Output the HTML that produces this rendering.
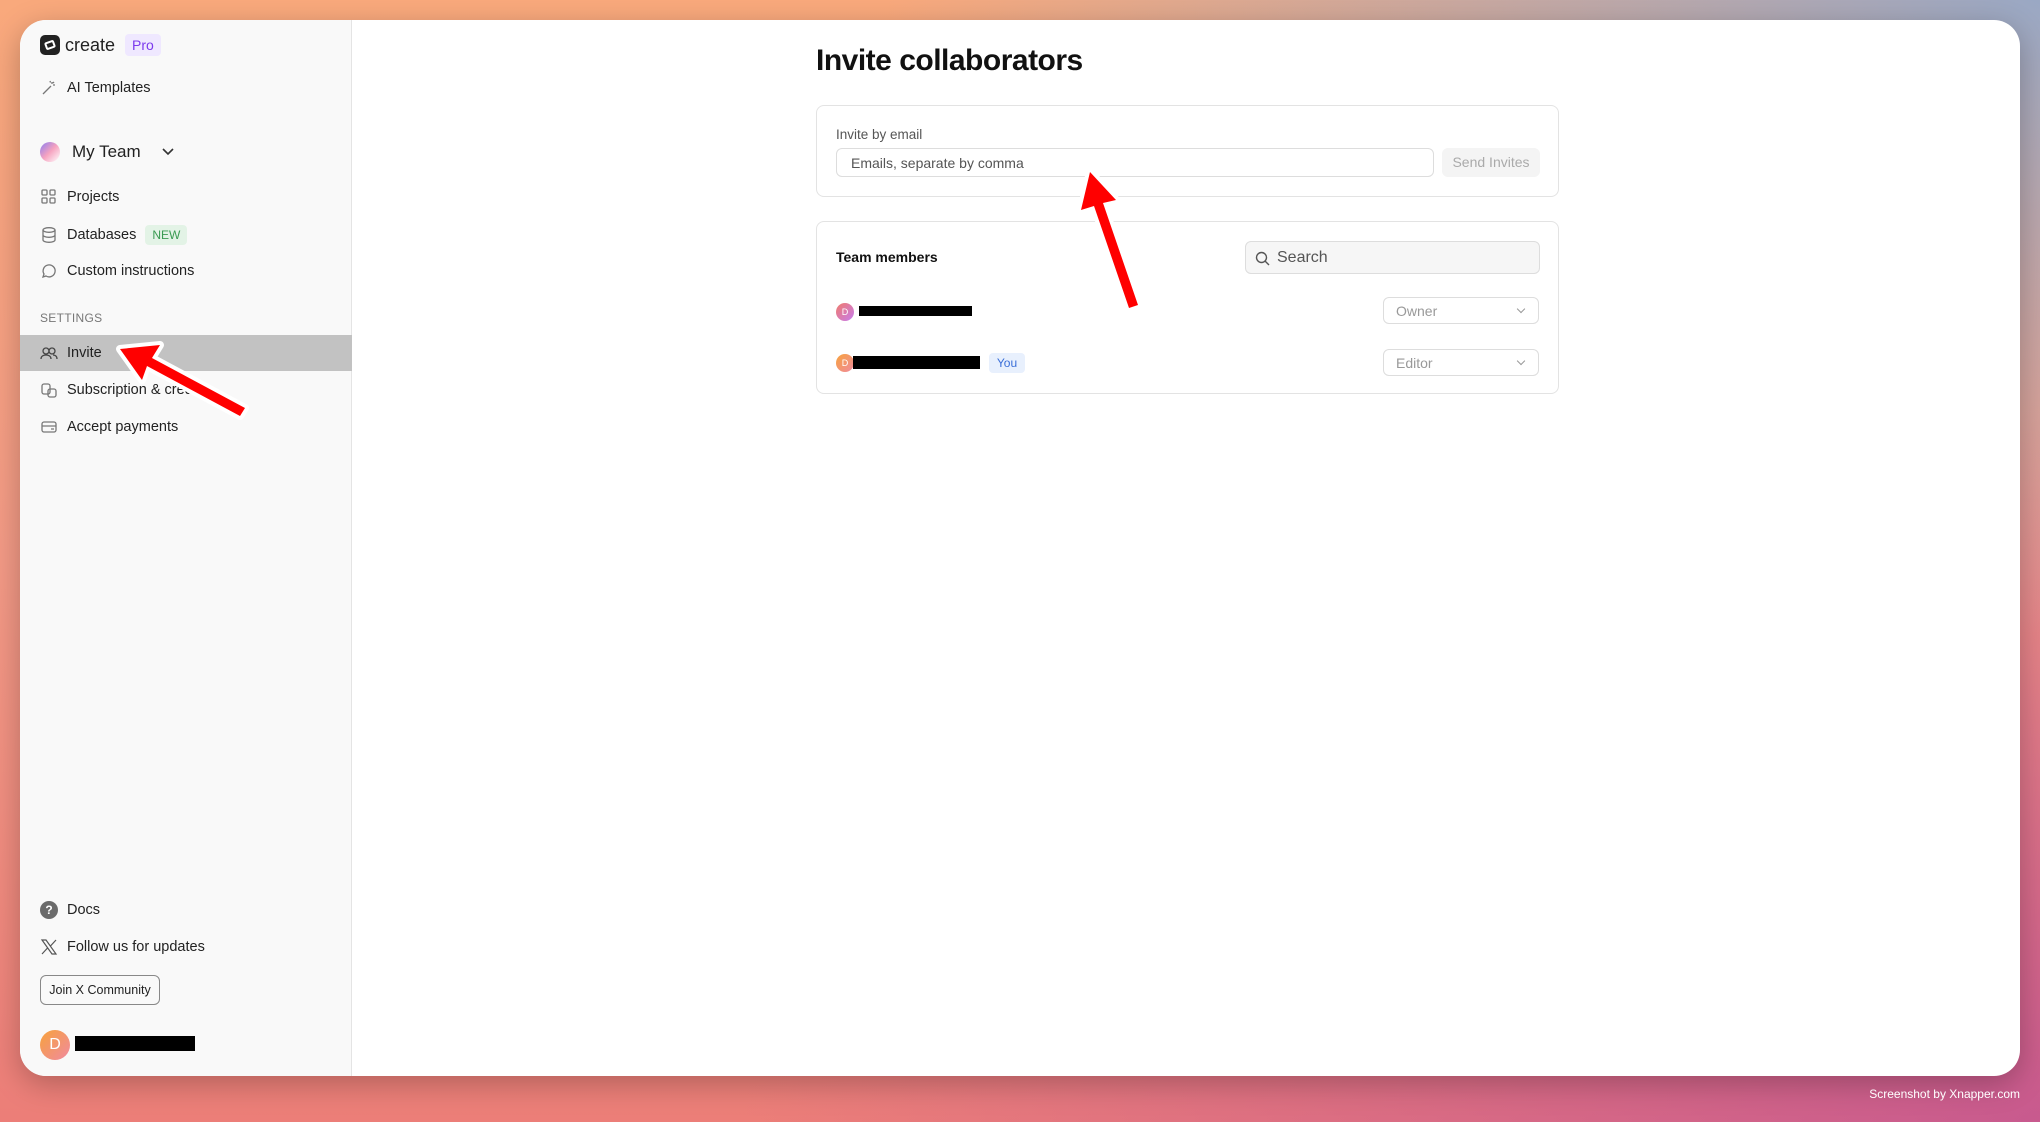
<!DOCTYPE html>
<html><head><meta charset="utf-8"><style>
*{box-sizing:border-box;margin:0;padding:0}
body{width:2040px;height:1122px;overflow:hidden;font-family:"Liberation Sans",sans-serif;position:relative;
background:radial-gradient(ellipse at 100% 0%,#9aa8c4 0%,rgba(154,168,196,0) 40%),
radial-gradient(ellipse at 100% 100%,#c85a8e 0%,rgba(200,90,142,0) 45%),
linear-gradient(180deg,#f9a97c 0%,#f39a86 50%,#ec7e78 100%);}
.win{position:absolute;left:20px;top:20px;width:2000px;height:1056px;background:#fff;border-radius:26px;overflow:hidden;box-shadow:0 8px 30px rgba(0,0,0,.25)}
.side{position:absolute;left:0;top:0;width:332px;height:100%;background:#f9f9f9;border-right:1px solid #e4e4e4}
.it{position:absolute;left:20px;font-size:14.5px;color:#222;display:flex;align-items:center;gap:9px}
.ic{width:18px;height:18px;display:inline-block}
.main{position:absolute;left:332px;top:0;right:0;bottom:0}
.card{position:absolute;left:464px;width:743px;border:1px solid #e3e3e3;border-radius:8px;background:#fff}
.sel{position:absolute;width:156px;height:27px;border:1px solid #ddd;border-radius:6px;color:#999;font-size:14px;padding:5px 0 0 12px}
.sel:after{content:"";position:absolute;right:14px;top:8px;width:5px;height:5px;border-right:1.3px solid #999;border-bottom:1.3px solid #999;transform:rotate(45deg)}
</style></head><body>
<div class="win">
<div class="side">
 <div style="position:absolute;left:20px;top:14px;display:flex;align-items:center;gap:5px">
  <div style="width:20px;height:20px;background:#222;border-radius:5px;position:relative"><div style="position:absolute;left:5px;top:6px;width:10px;height:8px;border:2px solid #fff;transform:rotate(-20deg);border-radius:2px"></div></div>
  <span style="font-size:18px;color:#222">create</span>
  <span style="margin-left:5px;background:#efe8ff;color:#7c3aed;font-size:14px;padding:3px 7px;border-radius:4px">Pro</span>
 </div>
 <div class="it" style="top:59px"><svg class="ic" viewBox="0 0 18 18" fill="none" stroke="#777" stroke-width="1.3"><path d="M3 15L11 7M12 3v2M15 6h-2M14 3l-1 1M10 2l.5 1.5"/></svg>AI Templates</div>
 <div class="it" style="top:122px;font-size:17px;gap:12px"><span style="width:20px;height:20px;border-radius:50%;background:linear-gradient(135deg,#8a7cf0,#f6a3c0,#fff);display:inline-block"></span>My Team <svg width="14" height="10" viewBox="0 0 14 10" style="margin-left:8px"><path d="M2 2l5 5 5-5" stroke="#333" stroke-width="1.6" fill="none"/></svg></div>
 <div class="it" style="top:168px"><svg class="ic" viewBox="0 0 18 18" fill="none" stroke="#777" stroke-width="1.3"><rect x="2" y="2" width="5" height="5" rx="1"/><rect x="10" y="2" width="5" height="5" rx="1"/><rect x="2" y="10" width="5" height="5" rx="1"/><rect x="10" y="10" width="5" height="5" rx="1"/></svg>Projects</div>
 <div class="it" style="top:205px"><svg class="ic" viewBox="0 0 18 18" fill="none" stroke="#777" stroke-width="1.3"><ellipse cx="9" cy="4" rx="6" ry="2.3"/><path d="M3 4v10c0 1.3 2.7 2.3 6 2.3s6-1 6-2.3V4M3 9c0 1.3 2.7 2.3 6 2.3s6-1 6-2.3"/></svg>Databases <span style="background:#e3f3e6;color:#3a9b52;font-size:12px;padding:3px 7px;border-radius:4px">NEW</span></div>
 <div class="it" style="top:242px"><svg class="ic" viewBox="0 0 18 18" fill="none" stroke="#777" stroke-width="1.3"><path d="M3 15l1-3a6 6 0 1 1 2 2z"/></svg>Custom instructions</div>
 <div style="position:absolute;left:20px;top:291px;font-size:12px;color:#777;letter-spacing:.3px">SETTINGS</div>
 <div style="position:absolute;left:0;top:315px;width:332px;height:36px;background:#c2c2c2"></div>
 <div class="it" style="top:324px"><svg class="ic" viewBox="0 0 18 18" fill="none" stroke="#444" stroke-width="1.3"><circle cx="6" cy="7" r="3"/><circle cx="12" cy="7" r="3"/><path d="M1 15c0-3 2.5-4 5-4s5 1 5 4M13 11c2 0 4 1 4 4"/></svg>Invite</div>
 <div class="it" style="top:361px"><svg class="ic" viewBox="0 0 18 18" fill="none" stroke="#777" stroke-width="1.3"><rect x="2" y="3" width="8" height="10" rx="2"/><rect x="8" y="8" width="8" height="8" rx="2"/></svg>Subscription &amp; credits</div>
 <div class="it" style="top:398px"><svg class="ic" viewBox="0 0 18 18" fill="none" stroke="#777" stroke-width="1.3"><rect x="2" y="4" width="14" height="10" rx="2"/><path d="M2 8h14M11 11h3"/></svg>Accept payments</div>
 <div class="it" style="top:881px"><span style="width:18px;height:18px;border-radius:50%;background:#6b6b6b;color:#fff;font-size:12px;font-weight:bold;text-align:center;line-height:18px">?</span>Docs</div>
 <div class="it" style="top:918px"><svg class="ic" viewBox="0 0 18 18" fill="none" stroke="#555" stroke-width="1.2"><path d="M2 2h4l10 14h-4zM16 2L10 8.5M2 16l6-6.5"/></svg>Follow us for updates</div>
 <div style="position:absolute;left:20px;top:955px;width:120px;height:30px;border:1px solid #888;border-radius:6px;font-size:12.5px;color:#222;text-align:center;line-height:28px">Join X Community</div>
 <div style="position:absolute;left:20px;top:1010px;width:30px;height:30px;border-radius:50%;background:linear-gradient(135deg,#f7a23b,#f08aa0);color:#fff;font-size:16px;text-align:center;line-height:30px">D</div>
 <div style="position:absolute;left:55px;top:1016px;width:120px;height:15px;background:#000"></div>
</div>
<div class="main">
 <div style="position:absolute;left:464px;top:24px;font-size:30px;font-weight:bold;color:#111;letter-spacing:-.5px">Invite collaborators</div>
 <div class="card" style="top:85px;height:92px">
  <div style="position:absolute;left:19px;top:21px;font-size:13.5px;color:#555">Invite by email</div>
  <div style="position:absolute;left:19px;top:42px;width:598px;height:29px;border:1px solid #ddd;border-radius:6px;font-size:14px;color:#555;padding:6px 0 0 14px">Emails, separate by comma</div>
  <div style="position:absolute;left:625px;top:42px;width:98px;height:29px;background:#f4f4f4;border-radius:6px;font-size:14px;color:#aaa;text-align:center;line-height:29px">Send Invites</div>
 </div>
 <div class="card" style="top:201px;height:173px">
  <div style="position:absolute;left:19px;top:27px;font-size:14px;font-weight:bold;color:#111">Team members</div>
  <div style="position:absolute;left:428px;top:19px;width:295px;height:33px;border:1px solid #ddd;background:#f6f6f6;border-radius:6px;font-size:16px;color:#555;padding:7px 0 0 31px">Search
   <svg style="position:absolute;left:9px;top:9px" width="15" height="15" viewBox="0 0 15 15" fill="none" stroke="#555" stroke-width="1.4"><circle cx="6.5" cy="6.5" r="5"/><path d="M10 10l4 4"/></svg></div>
  <div style="position:absolute;left:19px;top:81px;width:18px;height:18px;border-radius:50%;background:linear-gradient(135deg,#f07a6a,#c77df0);color:#fff;font-size:9px;text-align:center;line-height:18px">D</div>
  <div style="position:absolute;left:42px;top:84px;width:113px;height:10px;background:#000"></div>
  <div style="position:absolute;left:19px;top:132px;width:18px;height:18px;border-radius:50%;background:linear-gradient(135deg,#f7a23b,#f08aa0);color:#fff;font-size:9px;text-align:center;line-height:18px">D</div>
  <div style="position:absolute;left:36px;top:134px;width:127px;height:13px;background:#000"></div>
  <div style="position:absolute;left:172px;top:131px;width:36px;height:20px;background:#e8f0fd;color:#3b6fd8;font-size:12px;text-align:center;line-height:20px;border-radius:4px">You</div>
  <div class="sel" style="left:566px;top:75px">Owner</div>
  <div class="sel" style="left:566px;top:127px">Editor</div>
 </div>
</div>
</div>
<svg style="position:absolute;left:0;top:0" width="2040" height="1122">
 <g stroke="#fff" stroke-width="8" stroke-linejoin="round" fill="#fff">
  <path d="M120 349L160 345L152 358L245 408L240 416L147 366L142 380Z"/>
  <path d="M1090 172L1116 200L1103 203L1138 305L1129 308L1094 206L1081 210Z"/>
 </g>
 <g fill="#f00">
  <path d="M120 349L160 345L152 358L245 408L240 416L147 366L142 380Z"/>
  <path d="M1090 172L1116 200L1103 203L1138 305L1129 308L1094 206L1081 210Z"/>
 </g>
</svg>
<div style="position:absolute;right:20px;top:1087px;font-size:12px;color:#fff">Screenshot by Xnapper.com</div>
</body></html>
